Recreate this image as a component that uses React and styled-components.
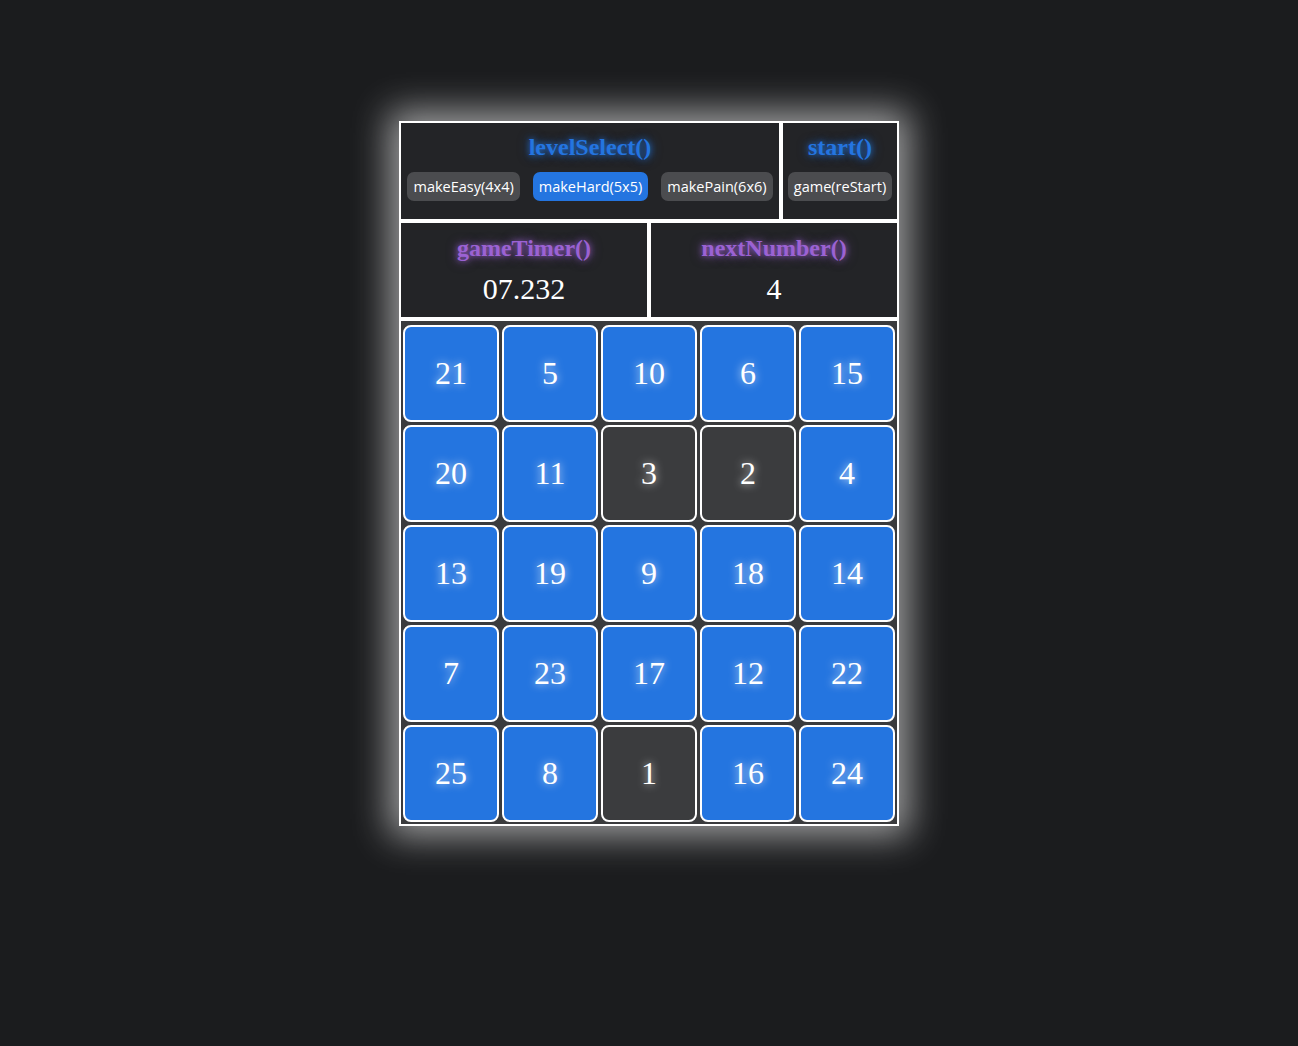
import React from 'react'
import styled, { createGlobalStyle } from 'styled-components'

const GlobalStyle = createGlobalStyle`
  html, body {
    margin: 0;
    padding: 0;
    background: #1b1c1e;
    font-family: "Liberation Serif", serif;
  }
`

const Page = styled.div`
  display: flex;
  justify-content: center;
  align-items: flex-start;
  padding-top: 121px;
  min-height: 1046px;
  box-sizing: border-box;
`

const Board = styled.div`
  width: 500px;
  display: flex;
  flex-direction: column;
  box-shadow: 0 0 34px 10px rgba(255, 255, 255, 0.58);
`

const Row = styled.div`
  display: flex;
`

const Panel = styled.div`
  box-sizing: border-box;
  flex: 0 0 ${p => p.$w}px;
  min-width: 0;
  height: ${p => p.$h}px;
  border: 2px solid #fff;
  background: #232427;
  display: flex;
  flex-direction: column;
  align-items: center;
  padding-top: ${p => p.$pt}px;
`

const Title = styled.div`
  font-family: "Liberation Serif", serif;
  font-weight: bold;
  font-size: 24px;
  line-height: 28px;
  color: ${p => (p.$purple ? '#9b62d3' : '#2475e0')};
  text-shadow: 0 0 6px ${p => (p.$purple ? 'rgba(155, 98, 211, 0.9)' : 'rgba(36, 117, 224, 0.9)')},
    0 0 12px ${p => (p.$purple ? 'rgba(155, 98, 211, 0.5)' : 'rgba(36, 117, 224, 0.5)')};
`

const Buttons = styled.div`
  display: flex;
  justify-content: center;
  margin-top: 11px;
`

const Button = styled.button`
  font-family: "Open Sans", "Noto Sans", sans-serif;
  font-size: 14.5px;
  height: 29px;
  padding: 0 6px;
  margin: 0 ${p => (p.$tight ? 0 : 6.5)}px;
  border: none;
  border-radius: 7px;
  color: #fff;
  background: ${p => (p.$active ? '#2475e0' : '#4b4c4f')};
  white-space: nowrap;
  cursor: pointer;
`

const Value = styled.div`
  font-family: "Liberation Serif", serif;
  font-size: 30px;
  line-height: 36px;
  color: #fff;
  margin-top: 9px;
`

const Grid = styled.div`
  box-sizing: border-box;
  border: 2px solid #fff;
  background: #3a3b3d;
  padding: 4px 2px 2px 2px;
  display: grid;
  grid-template-columns: repeat(5, 1fr);
  gap: 3px;
`

const Tile = styled.div`
  box-sizing: border-box;
  height: 97px;
  border: 2px solid #fff;
  border-radius: 8px;
  background: ${p => (p.$done ? '#3b3c3e' : '#2475e0')};
  display: flex;
  align-items: center;
  justify-content: center;
  font-family: "Liberation Serif", serif;
  font-size: 32px;
  color: #fff;
  text-shadow: 0 0 8px rgba(255, 255, 255, 0.8);
`

const numbers = [21, 5, 10, 6, 15, 20, 11, 3, 2, 4, 13, 19, 9, 18, 14, 7, 23, 17, 12, 22, 25, 8, 1, 16, 24]
const next = 4

export default function App() {
  return (
    <>
      <GlobalStyle />
      <Page>
        <Board>
          <Row>
            <Panel $w={382} $h={100} $pt={10}>
              <Title>levelSelect()</Title>
              <Buttons>
                <Button>makeEasy(4x4)</Button>
                <Button $active>makeHard(5x5)</Button>
                <Button>makePain(6x6)</Button>
              </Buttons>
            </Panel>
            <Panel $w={118} $h={100} $pt={10}>
              <Title>start()</Title>
              <Buttons>
                <Button $tight>game(reStart)</Button>
              </Buttons>
            </Panel>
          </Row>
          <Row>
            <Panel $w={250} $h={98} $pt={11}>
              <Title $purple>gameTimer()</Title>
              <Value>07.232</Value>
            </Panel>
            <Panel $w={250} $h={98} $pt={11}>
              <Title $purple>nextNumber()</Title>
              <Value>{next}</Value>
            </Panel>
          </Row>
          <Grid>
            {numbers.map(n => (
              <Tile key={n} $done={n < next}>{n}</Tile>
            ))}
          </Grid>
        </Board>
      </Page>
    </>
  )
}
